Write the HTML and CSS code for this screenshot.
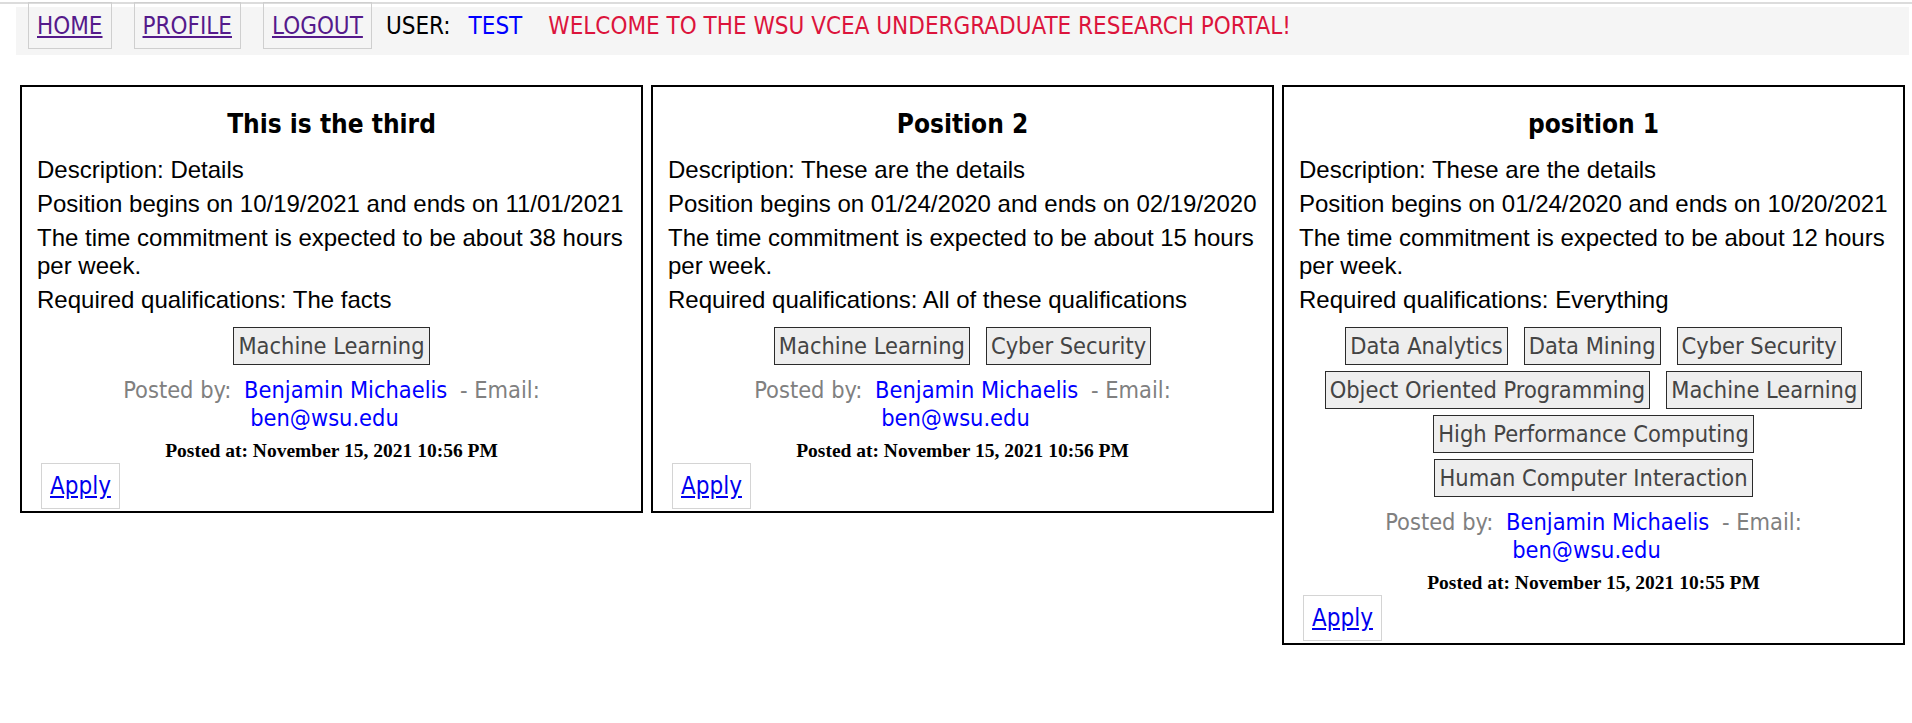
FILE: index.html
```html
<!DOCTYPE html>
<html lang="en">
<head>
<meta charset="utf-8">
<title>WSU VCEA Undergraduate Research Portal</title>
<link rel="stylesheet" href="styles.css">
</head>
<body>
<div class="topline"></div>
<nav class="nav">
  <a class="nav-link" href="#">HOME</a>
  <a class="nav-link" href="#">PROFILE</a>
  <a class="nav-link" href="#">LOGOUT</a>
  <span class="nav-text user-label">USER:</span>
  <span class="nav-text user-name">TEST</span>
  <span class="nav-text welcome">WELCOME TO THE WSU VCEA UNDERGRADUATE RESEARCH PORTAL!</span>
</nav>

<main class="cards">
  <section class="card">
    <h3 class="card-title">This is the third</h3>
    <p class="card-line">Description: Details</p>
    <p class="card-line">Position begins on 10/19/2021 and ends on 11/01/2021</p>
    <p class="card-line">The time commitment is expected to be about 38 hours per week.</p>
    <p class="card-line">Required qualifications: The facts</p>
    <div class="tags">
      <span class="tag">Machine Learning</span>
    </div>
    <div class="posted-by">Posted by: <a class="person" href="#">Benjamin Michaelis</a> - Email: <a class="person email" href="#">ben@wsu.edu</a></div>
    <h5 class="posted-at">Posted at: November 15, 2021 10:56 PM</h5>
    <div class="apply-row"><a class="apply" href="#">Apply</a></div>
  </section>

  <section class="card">
    <h3 class="card-title">Position 2</h3>
    <p class="card-line">Description: These are the details</p>
    <p class="card-line">Position begins on 01/24/2020 and ends on 02/19/2020</p>
    <p class="card-line">The time commitment is expected to be about 15 hours per week.</p>
    <p class="card-line">Required qualifications: All of these qualifications</p>
    <div class="tags">
      <span class="tag">Machine Learning</span>
      <span class="tag">Cyber Security</span>
    </div>
    <div class="posted-by">Posted by: <a class="person" href="#">Benjamin Michaelis</a> - Email: <a class="person email" href="#">ben@wsu.edu</a></div>
    <h5 class="posted-at">Posted at: November 15, 2021 10:56 PM</h5>
    <div class="apply-row"><a class="apply" href="#">Apply</a></div>
  </section>

  <section class="card">
    <h3 class="card-title">position 1</h3>
    <p class="card-line">Description: These are the details</p>
    <p class="card-line">Position begins on 01/24/2020 and ends on 10/20/2021</p>
    <p class="card-line">The time commitment is expected to be about 12 hours per week.</p>
    <p class="card-line">Required qualifications: Everything</p>
    <div class="tags">
      <span class="tag">Data Analytics</span>
      <span class="tag">Data Mining</span>
      <span class="tag">Cyber Security</span>
      <span class="tag">Object Oriented Programming</span>
      <span class="tag">Machine Learning</span>
      <span class="tag">High Performance Computing</span>
      <span class="tag">Human Computer Interaction</span>
    </div>
    <div class="posted-by">Posted by: <a class="person" href="#">Benjamin Michaelis</a> - Email: <a class="person email" href="#">ben@wsu.edu</a></div>
    <h5 class="posted-at">Posted at: November 15, 2021 10:55 PM</h5>
    <div class="apply-row"><a class="apply" href="#">Apply</a></div>
  </section>
</main>
</body>
</html>
```

FILE: styles.css
```css
html, body {
  margin: 0;
  padding: 0;
  background: #fff;
}

body {
  font-family: "DejaVu Sans Condensed", "DejaVu Sans", sans-serif;
  font-stretch: condensed;
  font-size: 24px;
  color: #000;
}

.topline {
  height: 2px;
  margin-top: 2px;
  background: #dcdcdc;
}

.nav {
  display: flex;
  align-items: flex-start;
  height: 48px;
  margin: 3px 3px 0 16px;
  background: #f5f5f5;
  line-height: 28px;
}

.nav-link {
  margin: -5px 0 0 22px;
  padding: 9px 8px 8px;
  border: 1px solid #cfcfcf;
  color: #551a8b;
  text-decoration: underline;
}

.nav-link:first-child {
  margin-left: 12px;
}

.nav-text {
  padding-top: 5px;
}

.user-label {
  margin-left: 14px;
  color: #000;
}

.user-name {
  margin-left: 18px;
  color: #0000ff;
}

.welcome {
  margin-left: 26px;
  color: #dc143c;
}

.cards {
  display: flex;
  align-items: flex-start;
  gap: 8px;
  margin: 30px 7px 0 20px;
}

.card {
  flex: 1 1 0;
  min-width: 0;
  border: 2px solid #000;
  padding: 0 15px 2px;
}

.card-title {
  margin: 21px 0 16px;
  font-size: 26px;
  line-height: 32px;
  font-weight: bold;
  text-align: center;
}

.card-line {
  margin: 6px 0 0;
  font-family: "Liberation Sans", Arial, sans-serif;
  font-size: 24px;
  line-height: 28px;
}

.tags {
  display: flex;
  flex-wrap: wrap;
  justify-content: center;
  gap: 6px 16px;
  margin-top: 13px;
}

.tag {
  padding: 4px;
  border: 1px solid #2b2b2b;
  background: #eeeeee;
  color: #444;
  font-size: 23.4px;
  line-height: 28px;
  white-space: nowrap;
}

.posted-by {
  margin-top: 11px;
  padding: 0 30px;
  text-align: center;
  color: #808080;
  font-size: 23.4px;
  line-height: 28px;
}

.person {
  margin: 0 6px;
  color: #0000ff;
  text-decoration: none;
}

.email {
  margin-right: 20px;
}

.posted-at {
  margin: 7px 0 0;
  font-family: "Liberation Serif", "Times New Roman", serif;
  font-size: 19.5px;
  line-height: 23px;
  font-weight: bold;
  text-align: center;
}

.apply-row {
  display: flex;
  margin-top: 1px;
}

.apply {
  margin-left: 4px;
  padding: 8px;
  border: 1px solid #d4d4d4;
  color: #0000ee;
  line-height: 28px;
  text-decoration: underline;
}
```
